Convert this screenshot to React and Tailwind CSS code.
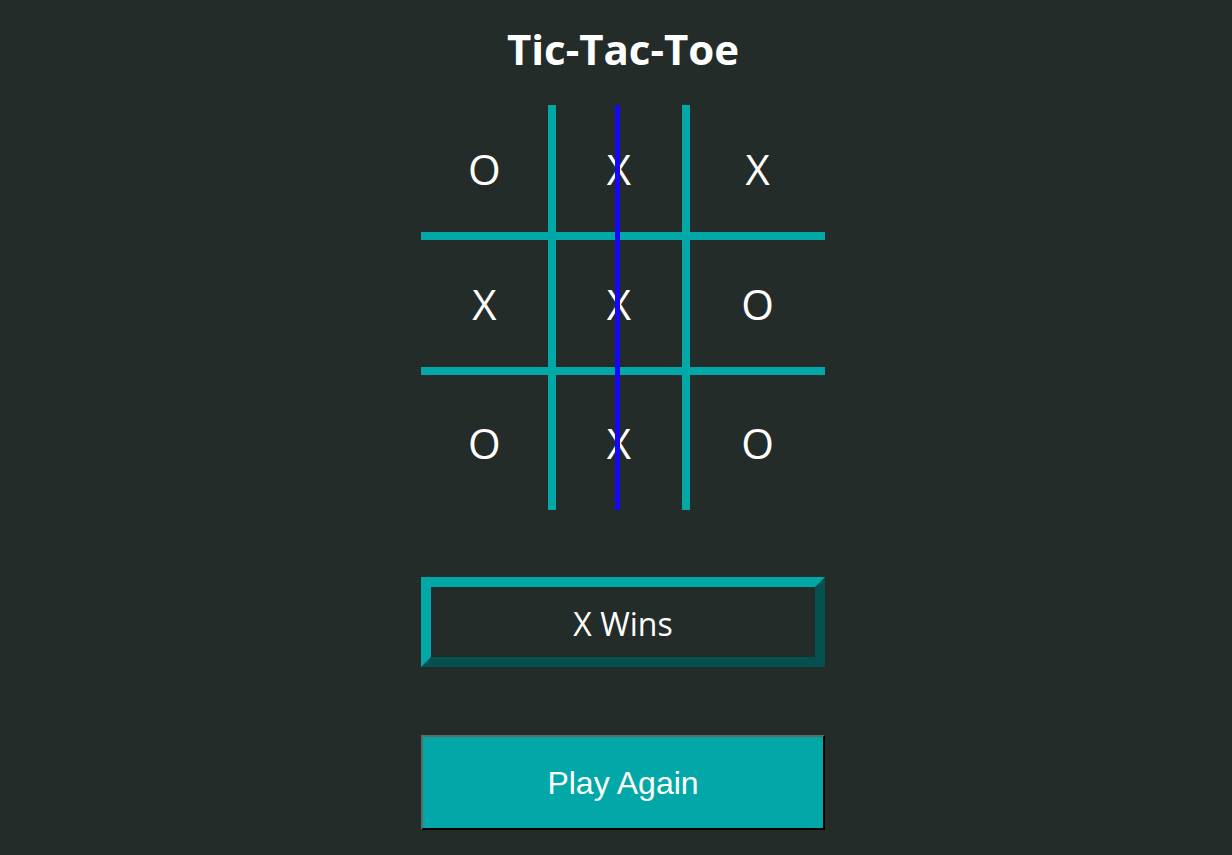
import React, { useState } from "react";

const cells = ["O", "X", "X", "X", "X", "O", "O", "X", "O"];

export default function App() {
  const [board] = useState(cells);

  return (
    <div className="min-h-screen bg-[#242c29] flex flex-col items-center pl-[14px] text-white font-['Open_Sans',sans-serif]">
      {/* Title */}
      <h1 className="pt-[20px] text-[42px] leading-[57px] font-bold">Tic-Tac-Toe</h1>

      {/* Board */}
      <div className="relative mt-[28px] w-[404px] h-[405px] grid grid-cols-3 grid-rows-3">
        {board.map((v, i) => (
          <div
            key={i}
            className={
              "flex items-center justify-center border-[#02a8a8] text-[42px] " +
              (i % 3 !== 2 ? "border-r-8 " : "") +
              (i < 6 ? "border-b-8" : "")
            }
          >
            {v}
          </div>
        ))}
        {/* winning line */}
        <div className="absolute top-0 bottom-0 left-[194px] w-[5px] bg-[#1608f6]" />
      </div>

      {/* Status */}
      <div className="mt-[67px] w-[404px] h-[90px] pt-[4px] border-[10px] border-t-[#02a8a8] border-l-[#02a8a8] border-b-[#04514f] border-r-[#04514f] flex items-center justify-center text-[32px]">
        X Wins
      </div>

      {/* Restart */}
      <button className="mt-[68px] w-[404px] h-[95px] bg-[#02a8a8] border-2 border-t-[#5b6b69] border-l-[#5b6b69] border-b-black border-r-black text-[32px] font-['Liberation_Sans',Arial,sans-serif] text-white">
        Play Again
      </button>
    </div>
  );
}
